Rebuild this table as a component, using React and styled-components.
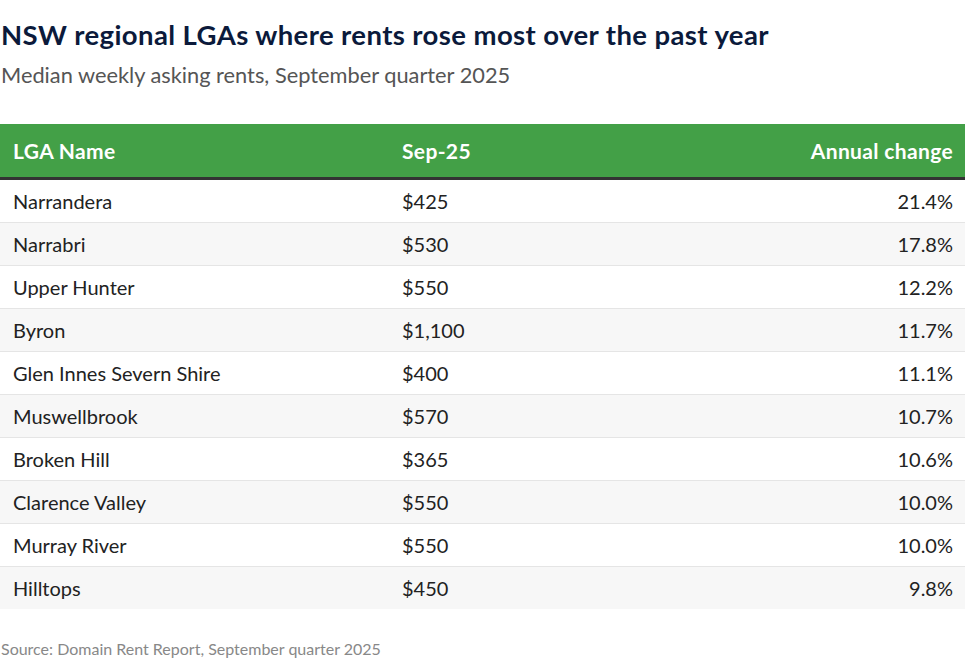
import React from "react";
import styled, { createGlobalStyle } from "styled-components";

const Global = createGlobalStyle`
  html, body { margin: 0; padding: 0; background: #ffffff; }
  body { font-family: "Lato", "PT Sans", "Liberation Sans", sans-serif; }
`;

const Page = styled.div`
  width: 965px;
  padding-top: 17px;
`;

const Title = styled.h1`
  margin: 0 0 0 1px;
  font-size: 27.5px;
  letter-spacing: 0.4px;
  line-height: 36px;
  font-weight: 700;
  color: #0b1a3b;
`;

const Subtitle = styled.p`
  margin: 8px 0 0 1px;
  font-size: 21.8px;
  line-height: 28px;
  font-weight: 400;
  color: #555555;
`;

const Table = styled.div`
  margin-top: 35px;
  display: flex;
  flex-direction: column;
`;

const Row = styled.div`
  display: grid;
  grid-template-columns: 390px 1fr 1fr;
  align-items: center;
  height: ${(p) => (p.$head ? "53px" : "42px")};
  background: ${(p) => (p.$head ? "#43a047" : p.$alt ? "#f7f7f7" : "#ffffff")};
  border-bottom: ${(p) => (p.$head ? "3px solid #333333" : p.$last ? "none" : "1px solid #e5e5e5")};
`;

const Cell = styled.div`
  padding: 0 12px 0 ${(p) => (p.$first ? "13px" : "12px")};
  text-align: ${(p) => (p.$right ? "right" : "left")};
  font-size: ${(p) => (p.$head ? "21px" : "20px")};
  letter-spacing: ${(p) => (p.$head ? "0.35px" : "0")};
  font-weight: ${(p) => (p.$head ? 700 : 400)};
  color: ${(p) => (p.$head ? "#ffffff" : "#222222")};
  white-space: nowrap;
`;

const Source = styled.p`
  margin: 30px 0 0 1px;
  font-size: 16px;
  line-height: 20px;
  color: #888888;
`;

const data = [
  ["Narrandera", "$425", "21.4%"],
  ["Narrabri", "$530", "17.8%"],
  ["Upper Hunter", "$550", "12.2%"],
  ["Byron", "$1,100", "11.7%"],
  ["Glen Innes Severn Shire", "$400", "11.1%"],
  ["Muswellbrook", "$570", "10.7%"],
  ["Broken Hill", "$365", "10.6%"],
  ["Clarence Valley", "$550", "10.0%"],
  ["Murray River", "$550", "10.0%"],
  ["Hilltops", "$450", "9.8%"],
];

export default function App() {
  return (
    <>
      <Global />
      <Page>
        <Title>NSW regional LGAs where rents rose most over the past year</Title>
        <Subtitle>Median weekly asking rents, September quarter 2025</Subtitle>
        <Table>
          <Row $head>
            <Cell $head $first>LGA Name</Cell>
            <Cell $head>Sep-25</Cell>
            <Cell $head $right>Annual change</Cell>
          </Row>
          {data.map((r, i) => (
            <Row key={r[0]} $alt={i % 2 === 1} $last={i === data.length - 1}>
              <Cell $first>{r[0]}</Cell>
              <Cell>{r[1]}</Cell>
              <Cell $right>{r[2]}</Cell>
            </Row>
          ))}
        </Table>
        <Source>Source: Domain Rent Report, September quarter 2025</Source>
      </Page>
    </>
  );
}
